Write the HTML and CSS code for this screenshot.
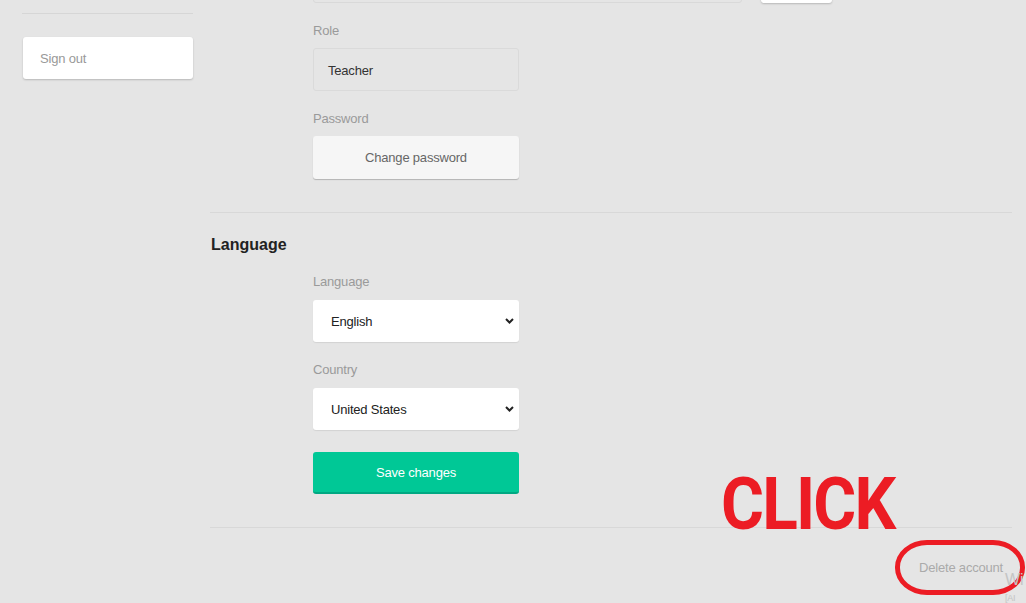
FILE: index.html
```html
<!DOCTYPE html>
<html lang="en">
<head>
  <meta charset="UTF-8" />
  <title>Account settings</title>
  <link rel="stylesheet" href="styles.css">
</head>
<body>

  <div class="page">
    <aside class="sidebar">
      <div class="side-divider"></div>
      <button class="signout">Sign out</button>
    </aside>

    <main class="main">
      <section class="section">
        <div class="top-row">
          <div class="top-input"></div>
          <div class="top-btn"></div>
        </div>

        <div class="field">
          <div class="label">Role</div>
          <div class="readonly">Teacher</div>
        </div>

        <div class="field last">
          <div class="label">Password</div>
          <button class="btn-light">Change password</button>
        </div>
      </section>

      <section class="section">
        <h2>Language</h2>

        <div class="field">
          <div class="label">Language</div>
          <div class="select-wrap">
            <select><option>English</option></select>
            <svg class="chev" width="9" height="6" viewBox="0 0 9 6"><path d="M1 1 L4.5 4.5 L8 1" fill="none" stroke="#222" stroke-width="2"/></svg>
          </div>
        </div>

        <div class="field">
          <div class="label">Country</div>
          <div class="select-wrap">
            <select><option>United States</option></select>
            <svg class="chev" width="9" height="6" viewBox="0 0 9 6"><path d="M1 1 L4.5 4.5 L8 1" fill="none" stroke="#222" stroke-width="2"/></svg>
          </div>
        </div>

        <button class="btn-save">Save changes</button>
      </section>

      <div class="delete-row">
        <a class="delete">Delete account</a>
      </div>
    </main>
  </div>

  <div class="click">CLICK</div>
  <div class="ring"></div>
  <div class="corner">Wi<br><span>[AI</span></div>

</body>
</html>
```

FILE: styles.css
```css
* {
  box-sizing: border-box;
}

body {
  margin: 0;
  background: #e5e5e5;
  font-family: 'Liberation Sans', Arial, sans-serif;
  font-size: 13px;
  letter-spacing: -0.2px;
  color: #333;
  overflow: hidden;
  height: 603px;
}

.page {
  display: flex;
}

.sidebar {
  width: 210px;
  padding: 13px 17px 0 22px;
}

.side-divider {
  border-top: 1px solid #d6d6d6;
  margin-bottom: 23px;
}

.signout {
  display: block;
  width: 170px;
  height: 42px;
  margin-left: 1px;
  background: #fff;
  border: none;
  border-radius: 3px;
  box-shadow: 0 1px 2px rgba(0,0,0,0.2);
  text-align: left;
  padding: 0 17px;
  font-family: inherit;
  font-size: 13px;
  letter-spacing: -0.2px;
  color: #999;
}

.main {
  width: 802px;
}

.section {
  border-bottom: 1px solid #d8d8d8;
  padding: 0 0 33px 103px;
}

.section h2 {
  margin: 0 0 20px -102px;
  padding-top: 23px;
  font-size: 16px;
  line-height: 18px;
  letter-spacing: 0;
  color: #222;
}

.top-row {
  display: flex;
  gap: 19px;
  margin-top: -40px;
  margin-bottom: 20px;
}

.top-input {
  width: 429px;
  height: 43px;
  border: 1px solid #d9d9d9;
  border-radius: 3px;
}

.top-btn {
  width: 71px;
  height: 43px;
  background: #fff;
  border-radius: 3px;
  box-shadow: 0 1px 2px rgba(0,0,0,0.2);
}

.field {
  margin-bottom: 20px;
}

.field.last {
  margin-bottom: 0;
}

.label {
  line-height: 16px;
  color: #9a9a9a;
  margin-bottom: 9px;
}

.readonly {
  width: 206px;
  height: 43px;
  border: 1px solid #dadada;
  border-radius: 3px;
  padding: 0 14px;
  line-height: 43px;
  color: #333;
}

.btn-light {
  display: block;
  width: 206px;
  height: 43px;
  background: #f6f6f6;
  border: none;
  border-radius: 3px;
  box-shadow: 0 1px 1px rgba(0,0,0,0.22);
  font-family: inherit;
  font-size: 13px;
  letter-spacing: -0.2px;
  color: #666;
}

.select-wrap {
  position: relative;
  width: 206px;
  margin-top: 10px;
}

.select-wrap select {
  display: block;
  width: 206px;
  height: 42px;
  -webkit-appearance: none;
  appearance: none;
  background: #fff;
  border: none;
  border-radius: 3px;
  box-shadow: 0 1px 1px rgba(0,0,0,0.08);
  padding: 0 18px;
  font-family: inherit;
  font-size: 13px;
  letter-spacing: -0.2px;
  color: #222;
  outline: none;
}

.chev {
  position: absolute;
  right: 5px;
  top: 18px;
}

.btn-save {
  display: block;
  width: 206px;
  height: 42px;
  margin-top: 22px;
  background: #00c896;
  border: none;
  border-bottom: 2px solid #00a882;
  border-radius: 3px;
  font-family: inherit;
  font-size: 13px;
  letter-spacing: -0.2px;
  color: #fff;
}

.delete-row {
  display: flex;
  justify-content: flex-end;
  padding: 32px 9px 0 0;
}

.delete {
  color: #aaa;
  line-height: 16px;
}

.click {
  position: absolute;
  left: 721px;
  top: 466px;
  font-family: Roboto, 'Liberation Sans', sans-serif;
  font-weight: 700;
  font-size: 73px;
  line-height: 76px;
  letter-spacing: -2px;
  color: #ec1c24;
  transform: scaleX(0.9);
  transform-origin: left top;
}

.ring {
  position: absolute;
  left: 895px;
  top: 540px;
  width: 130px;
  height: 55px;
  border: 5px solid #ec1c24;
  border-radius: 32px / 27px;
}

.corner {
  position: absolute;
  left: 1005px;
  top: 572px;
  font-size: 16px;
  line-height: 16px;
  color: #c4c4c4;
}

.corner span {
  font-size: 9px;
  line-height: 10px;
}
```
